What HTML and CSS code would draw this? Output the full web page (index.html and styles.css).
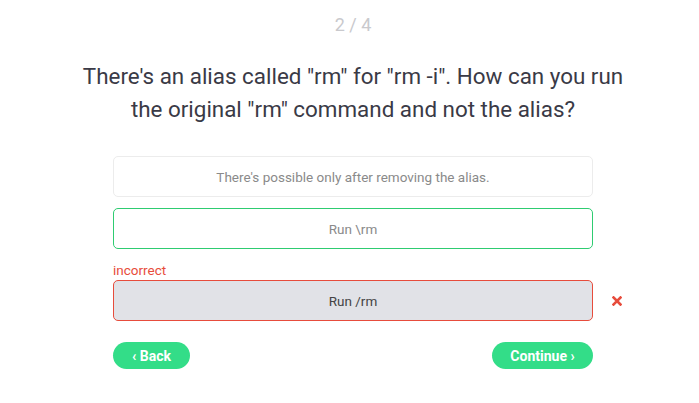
FILE: index.html
```html
<!DOCTYPE html>
<html lang="en">
<head>
    <meta charset="UTF-8">
    <meta name="viewport" content="width=device-width, initial-scale=1.0">
    <title>Quiz</title>
    <link rel="stylesheet" href="styles.css">
</head>
<body>
    <div class="quiz">
        <div class="counter">2 / 4</div>
        <h1 class="question">There's an alias called "rm" for "rm -i". How can you run the original "rm" command and not the alias?</h1>
        <div class="answers">
            <div class="answer">There's possible only after removing the alias.</div>
            <div class="answer correct">Run \rm</div>
            <div class="answer-wrap">
                <div class="note">incorrect</div>
                <div class="answer wrong">
                    Run /rm
                    <svg class="mark" width="10" height="10" viewBox="0 0 10 10">
                        <path d="M1.5 1.5 L8.5 8.5 M8.5 1.5 L1.5 8.5" stroke="#e74c3c" stroke-width="2.6" stroke-linecap="square"/>
                    </svg>
                </div>
            </div>
        </div>
        <div class="nav">
            <button class="btn back">&lsaquo; Back</button>
            <button class="btn next">Continue &rsaquo;</button>
        </div>
    </div>
</body>
</html>
```
FILE: styles.css
```css
body {
    margin: 0;
    padding: 0 0 0 7px;
    font-family: Roboto, "Liberation Sans", sans-serif;
    background-color: white;
}
.quiz {
    width: 480px;
    margin: 0 auto;
    padding-top: 12px;
}
.counter {
    text-align: center;
    font-size: 18px;
    color: #c9c9cd;
    line-height: 26px;
}
.question {
    margin: 22px -42px 0;
    text-align: center;
    font-size: 22.4px;
    font-weight: 400;
    line-height: 33px;
    color: #3a3a46;
}
.answers {
    margin-top: 30px;
}
.answer {
    position: relative;
    height: 41px;
    box-sizing: border-box;
    border: 1px solid #ececec;
    border-radius: 5px;
    display: flex;
    align-items: center;
    justify-content: center;
    font-size: 13.5px;
    color: #8a8a8a;
    margin-bottom: 11px;
}
.correct {
    border-color: #2ecc71;
}
.answer-wrap {
    margin-top: 13px;
}
.note {
    font-size: 13.5px;
    color: #e74c3c;
    line-height: 16px;
    margin-bottom: 2px;
}
.wrong {
    background-color: #e1e2e7;
    border-color: #e74c3c;
    color: #444;
}
.mark {
    position: absolute;
    right: -30px;
    top: 15px;
}
.nav {
    display: flex;
    justify-content: space-between;
    margin-top: 21px;
}
.btn {
    background-color: #33dd88;
    color: white;
    border: none;
    border-radius: 14px;
    height: 27px;
    font-family: inherit;
    font-size: 14px;
    font-weight: 700;
    cursor: pointer;
}
.back {
    width: 77px;
    padding: 0;
}
.next {
    width: 101px;
    padding: 0;
}
```
